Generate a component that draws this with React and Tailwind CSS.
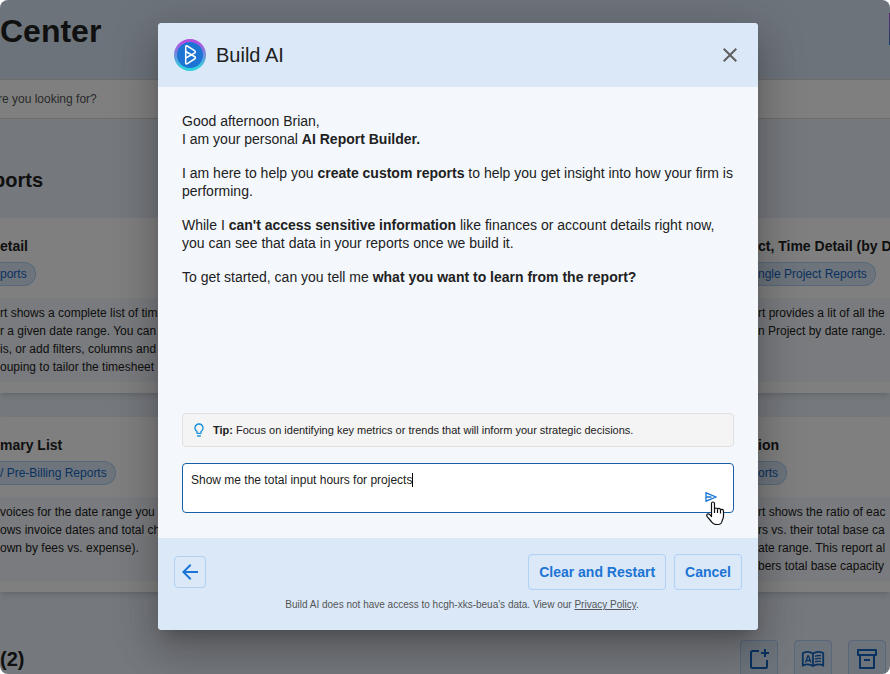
import React, { useState } from 'react';
import { MdArrowBack, MdClose, MdOutlineLightbulb } from 'react-icons/md';

const reports = [
  {
    title: 'etail',
    tag: 'ports',
    lines: ['rt shows a complete list of tim', 'r a given date range. You can', 'is, or add filters, columns and', 'ouping to tailor the timesheet'],
  },
  {
    title: 'ct, Time Detail (by D',
    tag: 'ngle Project Reports',
    lines: ['rt provides a lit of all the', 'n Project by date range.'],
  },
  {
    title: 'mary List',
    tag: '/ Pre-Billing Reports',
    lines: ['voices for the date range you', 'ows invoice dates and total ch', 'own by fees vs. expense).'],
  },
  {
    title: 'ion',
    tag: 'orts',
    lines: ['rt shows the ratio of eac', 'rs vs. their total base ca', 'ate range. This report al', 'bers total base capacity'],
  },
];

const ReportCard = ({ report, side }) => (
  <article className={`bg-white pt-[18px] pb-[11px] shadow-md whitespace-nowrap ${side}`}>
    <h3 className="text-sm font-bold leading-5">{report.title}</h3>
    <span className="mt-[6px] inline-flex h-6 items-center rounded-r-full border border-l-0 border-[#b0d0f4] bg-[#dae8f8] pr-2 text-xs text-[#1565c0]">
      {report.tag}
    </span>
    <div className="mt-3 h-[84px] bg-[#f4f7fc] py-[6px] text-xs leading-[18px]">
      {report.lines.map((line) => (
        <p key={line}>{line}</p>
      ))}
    </div>
  </article>
);

const Logo = () => (
  <svg className="h-8 w-8" viewBox="0 0 32 32" fill="none" aria-hidden="true">
    <defs>
      <linearGradient id="ring" x1="0" y1="0" x2="0" y2="1">
        <stop offset="0.1" stopColor="#b14fe0" />
        <stop offset="0.9" stopColor="#2fd0dc" />
      </linearGradient>
    </defs>
    <circle cx="16" cy="16" r="16" fill="url(#ring)" />
    <circle cx="16" cy="16" r="13" fill="#1c74d4" />
    <g stroke="#fff" strokeWidth="1.5" strokeLinejoin="round" strokeLinecap="round">
      <path d="M11.700 12V8q0-1.900 1.600-1l7.200 4.700q.9.6.9 1.300t-.9 1.200L11.700 19" />
      <path d="M11.700 12v11.700q0 1.900 1.600 1l7.200-4.700q.9-.6.9-1.300t-.9-1.200L11.700 12.500" />
    </g>
  </svg>
);

const AddIcon = () => (
  <svg className="h-6 w-6" viewBox="0 0 24 24" fill="none" stroke="currentColor" strokeWidth="2">
    <path d="M12 4H5.500Q4 4 4 5.500v14Q4 21 5.500 21h13q1.500 0 1.500-1.500V13" />
    <path d="M18 2v8M14 6h8" />
  </svg>
);

const BookIcon = () => (
  <svg className="h-6 w-6" viewBox="0 0 24 24" fill="none" stroke="currentColor" strokeWidth="1.8">
    <path d="M12 6.500C9 4.500 5 4.500 1.800 6v12.500c3.200-1.500 7.200-1.500 10.200.500 3-2 7-2 10.200-.500V6C19 4.500 15 4.500 12 6.500zV19" />
    <path d="M4.500 15.500L6.800 9h.8l2.300 6.500M5.300 13.500h3.800" strokeWidth="1.300" />
    <path d="M14 9.300q3-1.200 6-.6M14 12.100q3-1.200 6-.6M14 14.900q3-1.200 6-.6" strokeWidth="1.300" />
  </svg>
);

const ArchiveIcon = () => (
  <svg className="h-6 w-6" viewBox="0 0 24 24" fill="none" stroke="currentColor" strokeWidth="2">
    <path d="M3 3h18v5H3zM5 8v13h14V8M9 13h6" strokeLinejoin="round" />
  </svg>
);

const SendIcon = () => (
  <svg className="h-3 w-3" viewBox="0 0 12 12" fill="none" stroke="currentColor">
    <path d="M1 1.800v8.400L11 6zM1 6h5.500" strokeWidth="1.300" />
  </svg>
);

const HandCursor = () => (
  <svg className="pointer-events-none absolute top-[38px] right-[9px] h-6 w-[19px]" viewBox="0 0 19 24" aria-hidden="true">
    <path
      d="M5.500 13.500V2.500Q5.500 1 7 1t1.500 1.500V8q0-1 1.400-1t1.600 1.200q.2-.8 1.500-.8T14.500 9q.3-.6 1.400-.6 1.600 0 1.600 1.800V15q0 2-1 3.800-.5 1-.5 1.800-1 3-5 3-3.600 0-5.300-2.600L1.200 15.600Q.2 14 1.300 13.100q1.200-.8 2.500.5l1.700 1.900z"
      fill="#fff"
      stroke="#111"
      strokeWidth="1.200"
      strokeLinejoin="round"
    />
    <path d="M8.500 7.500v4.500M11.500 8.200V12M14.500 9v3.500" stroke="#111" strokeWidth="1.200" />
  </svg>
);

const toolClass = 'flex h-[38px] w-[38px] items-center justify-center rounded border border-[#b0d0f4] bg-[#dae8f8] text-[#1565c0]';

const ReportCenter = () => (
  <div className="min-h-screen bg-[#eaf1fb]">
    <header className="flex h-[79px] items-start justify-between bg-[#dae7f7] pt-[13px]">
      <h1 className="text-[32px] font-bold leading-9">Center</h1>
      <button aria-label="Build AI" className="-mr-[31px] h-8 w-8 shrink-0 bg-linear-to-b from-[#b14fe0] to-[#1c74d4]" />
    </header>
    <input
      aria-label="Search reports"
      placeholder="re you looking for?"
      className="block h-10 w-full border-y border-[#d8d8d8] bg-white text-xs -indent-[2px] placeholder:text-[#555]"
    />
    <h2 className="mt-[47px] -indent-[7px] text-xl font-bold leading-7">ports</h2>
    <section className="mt-6 grid grid-cols-2 gap-y-6">
      {reports.map((report, i) => (
        <ReportCard key={report.title} report={report} side={i % 2 ? 'pl-[313px]' : ''} />
      ))}
    </section>
    <div className="mt-12 flex justify-between pr-1">
      <h2 className="mt-[5px] text-xl font-bold leading-7">(2)</h2>
      <div className="flex gap-4">
        <button aria-label="New report" className={toolClass}><AddIcon /></button>
        <button aria-label="Glossary" className={toolClass}><BookIcon /></button>
        <button aria-label="Archive" className={toolClass}><ArchiveIcon /></button>
      </div>
    </div>
  </div>
);

const BuildDialog = () => {
  const [prompt, setPrompt] = useState('Show me the total input hours for projects');

  return (
    <div role="dialog" aria-label="Build AI" className="w-full max-w-[600px] overflow-hidden rounded bg-[#f4f8fd] shadow-[0_11px_15px_-7px_rgba(0,0,0,0.2),0_24px_38px_3px_rgba(0,0,0,0.14),0_9px_46px_8px_rgba(0,0,0,0.12)]">
      <header className="flex h-16 items-center justify-between bg-[#dae8f8] px-4">
        <div className="flex items-center gap-[10px]">
          <Logo />
          <h2 className="text-xl">Build AI</h2>
        </div>
        <button aria-label="Close" className="text-[#5f5f5f]"><MdClose size={24} /></button>
      </header>

      <div className="px-6 py-[25px]">
        <div className="flex min-h-[301px] flex-col gap-4 text-sm leading-[18px]">
          <p>Good afternoon Brian,<br />I am your personal <b>AI Report Builder.</b></p>
          <p>I am here to help you <b>create custom reports</b> to help you get insight into how your firm is performing.</p>
          <p>While I <b>can't access sensitive information</b> like finances or account details right now, you can see that data in your reports once we build it.</p>
          <p>To get started, can you tell me <b>what you want to learn from the report?</b></p>
        </div>
        <div className="flex h-[34px] items-center gap-[6px] rounded border border-[#e0e0e0] bg-[#f4f4f4] px-2 text-[11px]">
          <MdOutlineLightbulb size={16} className="text-[#1c93dc]" />
          <p><b>Tip:</b> Focus on identifying key metrics or trends that will inform your strategic decisions.</p>
        </div>
        <div className="relative mt-4">
          <textarea
            aria-label="Your request"
            value={prompt}
            onChange={(e) => setPrompt(e.target.value)}
            className="block h-[50px] w-full resize-none rounded border border-[#175ea8] bg-white px-2 py-2 text-xs leading-4 caret-transparent outline-none"
          />
          {/* Text caret */}
          <span className="pointer-events-none absolute top-[10px] left-[230px] h-[14px] w-px bg-black" />
          <button aria-label="Send" className="absolute right-[17px] bottom-[10px] text-[#1c74d4]"><SendIcon /></button>
          <HandCursor />
        </div>
      </div>

      <footer className="bg-[#dae8f8] px-4 pt-4 pb-[18px]">
        <div className="flex items-center gap-2 text-sm font-bold text-[#1c74d4]">
          <button aria-label="Back" className="mr-auto flex h-8 w-8 items-center justify-center rounded border border-[#b0d0f4]">
            <MdArrowBack size={24} />
          </button>
          <button className="h-9 rounded border border-[#b0d0f4] px-[10px]">Clear and Restart</button>
          <button className="h-9 rounded border border-[#b0d0f4] px-[10px]">Cancel</button>
        </div>
        <p className="mt-2 pl-2 text-center text-[10px] leading-[14px] text-[#555]">
          Build AI does not have access to hcgh-xks-beua's data. View our <a href="#privacy" className="underline">Privacy Policy</a>.
        </p>
      </footer>
    </div>
  );
};

export default function App() {
  return (
    <div className="relative h-screen overflow-hidden rounded-lg font-['Liberation_Sans',Arial,sans-serif] text-[#212121]">
      <ReportCenter />
      <div className="absolute inset-0 flex items-start justify-center bg-black/50 pt-[23px] pl-[26px]">
        <BuildDialog />
      </div>
    </div>
  );
}
